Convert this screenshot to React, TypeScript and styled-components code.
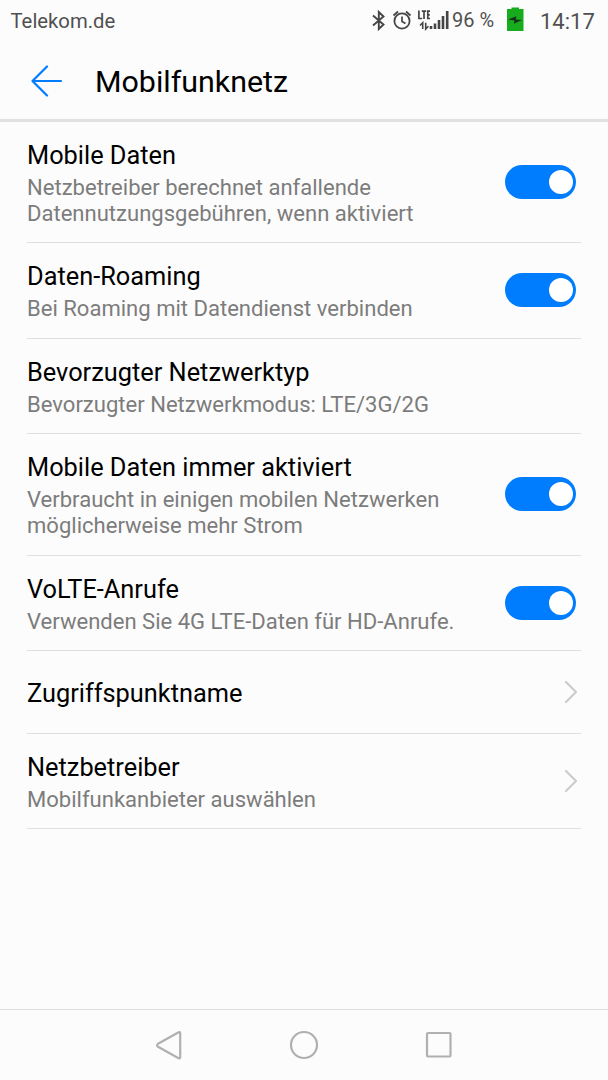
import React from 'react';
import styled, { createGlobalStyle } from 'styled-components';

const GlobalStyle = createGlobalStyle`
  * { box-sizing: border-box; }
  body { margin: 0; background: #fcfcfc; }
`;

const Screen = styled.div`
  display: flex;
  flex-direction: column;
  width: 608px;
  height: 1080px;
  overflow: hidden;
  background: #fcfcfc;
  font-family: Roboto, 'Liberation Sans', sans-serif;
  color: #000;
`;

const StatusBar = styled.div`
  display: flex;
  align-items: center;
  height: 42px;
  padding: 0 14px 0 10.5px;
  color: #505050;
  white-space: nowrap;
`;

const Carrier = styled.span`
  flex: 1;
  font-size: 20.3px;
  line-height: 26px;
`;

const StatusIcons = styled.svg`
  display: block;
  width: 82px;
  height: 42px;
`;

const Percent = styled.span`
  width: 54px;
  font-size: 20px;
  line-height: 26px;
  padding-bottom: 2px;
`;

const Battery = styled.svg`
  display: block;
  width: 18px;
  height: 42px;
`;

const Clock = styled.span`
  width: 54px;
  margin-left: 16px;
  padding-top: 1px;
  font-size: 22px;
  line-height: 26px;
`;

const Header = styled.header`
  display: flex;
  align-items: center;
  height: 79.5px;
  padding-left: 31px;
  border-bottom: 3px solid #e1e1e1;
`;

const BackIcon = styled.svg`
  display: block;
  width: 32px;
  height: 32px;
  margin: 2px 32px 0 0;
`;

const Heading = styled.h1`
  margin: 4px 0 0;
  font-size: 30.4px;
  line-height: 36px;
  font-weight: 400;
`;

const List = styled.main`
  flex: 1;
  padding: 0 27px;
`;

const Row = styled.section<{ $height: number }>`
  display: flex;
  align-items: center;
  justify-content: space-between;
  height: ${(p) => p.$height}px;
  border-bottom: 1px solid #dfdfdf;
`;

const Texts = styled.div<{ $single: boolean }>`
  padding-top: ${(p) => (p.$single ? 4 : 3)}px;
  white-space: nowrap;
`;

const Title = styled.div`
  font-size: 25.35px;
  line-height: 31px;
`;

const Summary = styled.div`
  font-size: 22.05px;
  line-height: 26px;
  color: #7c7c7c;

  ${Title} + & {
    margin-top: 4px;
  }
`;

const Toggle = styled.span`
  display: flex;
  justify-content: flex-end;
  align-items: center;
  width: 71px;
  height: 34px;
  margin-right: 5px;
  padding-right: 3.5px;
  border-radius: 17px;
  background: #007dff;
`;

const Knob = styled.span`
  width: 24px;
  height: 24px;
  border-radius: 50%;
  background: #fff;
`;

const Chevron = styled.svg`
  display: block;
  width: 14px;
  height: 24px;
  margin-right: 3px;
`;

const NavBar = styled.nav`
  display: flex;
  justify-content: center;
  align-items: center;
  gap: 103px;
  height: 71px;
  padding-bottom: 1px;
  border-top: 1px solid #dedede;
`;

const NavIcon = styled.svg`
  display: block;
  width: 32px;
  height: 32px;
  fill: none;
  stroke: #b0b0b0;
  stroke-width: 2.2;
  stroke-linejoin: round;
`;

type Item = { title: string; lines: string[]; height: number; control?: 'toggle' | 'chevron' };

const items: Item[] = [
  {
    title: 'Mobile Daten',
    lines: ['Netzbetreiber berechnet anfallende', 'Datennutzungsgebühren, wenn aktiviert'],
    height: 121.5,
    control: 'toggle',
  },
  { title: 'Daten-Roaming', lines: ['Bei Roaming mit Datendienst verbinden'], height: 95.5, control: 'toggle' },
  { title: 'Bevorzugter Netzwerktyp', lines: ['Bevorzugter Netzwerkmodus: LTE/3G/2G'], height: 95.5 },
  {
    title: 'Mobile Daten immer aktiviert',
    lines: ['Verbraucht in einigen mobilen Netzwerken', 'möglicherweise mehr Strom'],
    height: 121.5,
    control: 'toggle',
  },
  { title: 'VoLTE-Anrufe', lines: ['Verwenden Sie 4G LTE-Daten für HD-Anrufe.'], height: 95.5, control: 'toggle' },
  { title: 'Zugriffspunktname', lines: [], height: 82.5, control: 'chevron' },
  { title: 'Netzbetreiber', lines: ['Mobilfunkanbieter auswählen'], height: 95.5, control: 'chevron' },
];

export default function App() {
  return (
    <Screen>
      <GlobalStyle />
      <StatusBar>
        <Carrier>Telekom.de</Carrier>
        <StatusIcons viewBox="370 0 82 42" fill="none" stroke="#454545">
          <path d="M373 15.500l10.500 9-4.700 4.500V12l4.700 4.500L373 25.500" strokeWidth="1.900" />
          <circle cx="402" cy="21" r="7.600" strokeWidth="1.800" />
          <path d="M402 16.500v5l3.500 2M393.500 15.500l4.500-4M410.500 15.500l-4.500-4" strokeWidth="1.700" />
          <path d="M418.900 10.500v8h3.300M421.800 11.200h4.400M424 11v8M430 11.200h-2.200v7.300H430M427.800 14.800h2" strokeWidth="1.700" />
          <path d="M422.700 29v-6.200l-2.700 2.700M425.700 22.800V29l2.700-2.700" strokeWidth="1.600" />
          <path d="M431 29v-3M435 29v-5.500M439 29v-9M443 29v-13M447.200 29V11" strokeWidth="2.600" />
        </StatusIcons>
        <Percent>96 %</Percent>
        <Battery viewBox="506 0 18 42">
          <path d="M507 9h4.500V7.500h7.500V9h4.500v22H507z" fill="#17ab1e" />
          <path d="M508 19.500l8.500-3.300-.8 3.300 6.300.5-8.200 3.700.7-3.300z" fill="#173018" />
        </Battery>
        <Clock>14:17</Clock>
      </StatusBar>
      <Header>
        <BackIcon viewBox="0 0 32 32" fill="none" stroke="#007dff" strokeWidth="2.200" strokeLinecap="round" strokeLinejoin="round">
          <path d="M16 1.500L1.500 16 16 30.500M1.500 16H30" />
        </BackIcon>
        <Heading>Mobilfunknetz</Heading>
      </Header>
      <List>
        {items.map((item) => (
          <Row key={item.title} $height={item.height}>
            <Texts $single={item.lines.length === 0}>
              <Title>{item.title}</Title>
              {item.lines.map((line) => (
                <Summary key={line}>{line}</Summary>
              ))}
            </Texts>
            {item.control === 'toggle' && (
              <Toggle>
                <Knob />
              </Toggle>
            )}
            {item.control === 'chevron' && (
              <Chevron viewBox="0 0 14 24" fill="none" stroke="#ccc" strokeWidth="2.200" strokeLinecap="round" strokeLinejoin="round">
                <path d="M2 2l10 10L2 22" />
              </Chevron>
            )}
          </Row>
        ))}
      </List>
      <NavBar>
        <NavIcon viewBox="0 0 32 32">
          <path d="M27.200 4v24q0 2-2 1L5 17.800q-2-1.500 0-3L25.200 3.500q2-1 2 .5z" />
        </NavIcon>
        <NavIcon viewBox="0 0 32 32">
          <circle cx="16" cy="16" r="13" />
        </NavIcon>
        <NavIcon viewBox="0 0 32 32">
          <rect x="4" y="4" width="23.500" height="23.500" rx="1" />
        </NavIcon>
      </NavBar>
    </Screen>
  );
}
